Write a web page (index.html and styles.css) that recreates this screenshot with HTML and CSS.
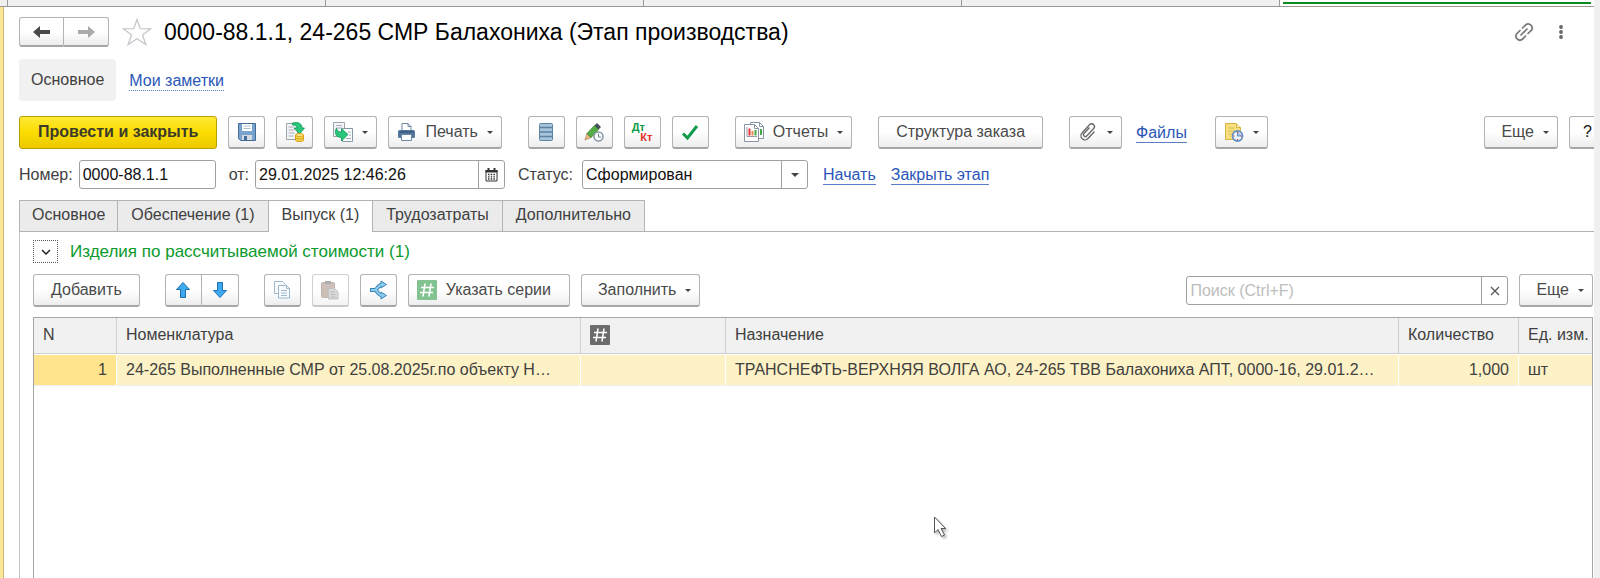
FILE: index.html
```html
<!DOCTYPE html>
<html lang="ru">
<head>
<meta charset="utf-8">
<title>0000-88.1.1, 24-265 СМР Балахониха (Этап производства)</title>
<link rel="stylesheet" href="styles.css">
</head>
<body>
<div class="app">
  <div class="window-tabs">
    <span class="window-tab-edge"></span><span class="window-tab"></span><span class="window-tab"></span><span class="window-tab"></span><span class="window-tab"></span><span class="window-tab-active"></span>
  </div>
  <main class="form">
    <header class="title-bar">
      <div class="button-pair nav-pair">
        <button class="btn" aria-label="Назад"><svg width="18" height="14" viewBox="0 0 18 14"><path d="M0 7 7 1v4h10v4H7v4z" fill="#4a4a4a"/></svg></button>
        <button class="btn" aria-label="Вперед"><svg width="18" height="14" viewBox="0 0 18 14"><path d="M18 7 11 1v4H1v4h10v4z" fill="#aaa"/></svg></button>
      </div>
      <button class="icon-btn star" aria-label="В избранное"><svg width="30" height="28" viewBox="0 0 30 28"><path d="M15 1.500 18.300 10.700 28.500 10.900 20.500 17 23.800 26.500 15 20.700 6.200 26.500 9.500 17 1.500 10.900 11.700 10.700z" fill="#fff" stroke="#c3c7cc" stroke-width="1.300"/></svg></button>
      <h1 class="title">0000-88.1.1, 24-265 СМР Балахониха (Этап производства)</h1>
      <button class="icon-btn" aria-label="Ссылка"><svg width="20" height="20" viewBox="0 0 20 20" fill="none" stroke="#777" stroke-width="1.700" stroke-linecap="round"><path d="M8.500 6 11.700 2.800a4 4 0 0 1 5.600 5.600L14 11.500M6 8.500 2.800 11.700a4 4 0 0 0 5.600 5.600L11.500 14M7 13l6-6"/></svg></button>
      <button class="icon-btn" aria-label="Меню"><svg width="4" height="14" viewBox="0 0 4 14" fill="#666"><circle cx="2" cy="2" r="1.900"/><circle cx="2" cy="7" r="1.900"/><circle cx="2" cy="12" r="1.900"/></svg></button>
    </header>

    <nav class="sections">
      <span class="section-current">Основное</span>
      <a class="link link-dotted" href="#notes">Мои заметки</a>
    </nav>

    <div class="command-bar">
      <div class="group">
        <button class="btn btn-primary">Провести и закрыть</button>
        <button class="btn btn-icon" aria-label="Записать"><svg width="20" height="20" viewBox="0 0 20 20"><path d="M1.500 1.500h17v17h-15l-2-2z" fill="#78a3cf" stroke="#426b99"/><path d="M5 2h10v7H5z" fill="#fff"/><path d="M6.500 4h7M6.500 6.500h7" stroke="#aac0d5"/><path d="M5 13h10v5H5z" fill="#d5dbe1"/><path d="M7 14h3v4H7z" fill="#426b99"/></svg></button>
        <button class="btn btn-icon" aria-label="Провести"><svg width="20" height="20" viewBox="0 0 20 20"><path d="M1.500 1.500h11v16h-11z" fill="#f4f5f6" stroke="#9aa3aa"/><path d="M3.500 5h5M3.500 8h6M3.500 11h6M3.500 14h5" stroke="#aab"/><path d="M7.500 1C13-.5 17 1.500 17 6h2.500l-5 6L9 6h3c0-2-1.500-3-4.500-3z" fill="#28c77c" stroke="#129655" stroke-width=".8"/><path d="M10.500 13v5c0 2 8 2 8 0v-5" fill="#f7d44c" stroke="#d4a017"/><ellipse cx="14.500" cy="13" rx="4" ry="1.500" fill="#ffe88a" stroke="#d4a017"/><path d="M10.500 15.500c0 2 8 2 8 0" fill="none" stroke="#d4a017"/></svg></button>
        <button class="btn btn-menu" aria-label="Создать на основании"><svg width="20" height="20" viewBox="0 0 20 20"><path d="M.5.500h11v14H.5z" fill="#f4f5f6" stroke="#9aa3aa"/><path d="M3 3.500h6M3 6h6" stroke="#aab"/><path d="M9.500 6.500h10v13h-10z" fill="#fff" stroke="#8796a8"/><path d="M15 10h3M16 13h2M13 16.500h5" stroke="#9ab"/><path d="M3.500 6c.5 3 2 4 5 4V6.500l6.500 6L8.500 19v-3.500C3 15.500 1 11 3.500 6z" fill="#28c77c" stroke="#129655" stroke-width=".8"/></svg><span class="caret"></span></button>
        <button class="btn btn-menu"><svg width="19" height="20" viewBox="0 0 19 20"><path d="M5 9V1.500h6l3 3V9" fill="#fff" stroke="#6d88a5"/><path d="M11 1.500v3h3" fill="none" stroke="#6d88a5"/><rect x="1" y="8" width="17" height="8" rx="1.500" fill="#54769c"/><path d="M2.500 10h14" stroke="#2f4f75"/><path d="M4.500 12.500h10v6h-10z" fill="#fff" stroke="#6d88a5"/></svg><span class="menu-text">Печать</span><span class="caret"></span></button>
      </div>
      <div class="group">
        <button class="btn btn-icon" aria-label="Список"><svg width="14" height="20" viewBox="0 0 14 20"><rect x=".5" y="1.500" width="13" height="17" rx="1" fill="#a9c5da" stroke="#5b83a5"/><path d="M1 5.500h12M1 10h12M1 14.500h12" stroke="#5b83a5" stroke-width="1.300"/></svg></button>
        <button class="btn btn-icon" aria-label="Отложенное изменение"><svg width="20" height="20" viewBox="0 0 20 20"><path d="M1 18 3 11.500 7 15.500z" fill="#e9bd84" stroke="#a77a45" stroke-width=".7"/><path d="M3 11.500 10.500 3.500 14.500 7.500 7 15.500z" fill="#55ad46" stroke="#377e2f" stroke-width=".8"/><path d="M10.500 3.500 13 1 17 5 14.500 7.500z" fill="#485057"/><circle cx="14.500" cy="14.500" r="4.500" fill="#fff" stroke="#8c9aaa" stroke-width="1.600"/><path d="M14.500 11.500v3.500H17" fill="none" stroke="#718091"/></svg></button>
        <button class="btn btn-icon btn-dtkt" aria-label="Проводки"><span class="debit">Дт</span><span class="credit">Кт</span></button>
        <button class="btn btn-icon" aria-label="Проверить"><svg width="18" height="18" viewBox="0 0 18 18"><path d="M2 10.500 6.500 15 16 3" fill="none" stroke="#0e9b4b" stroke-width="3"/></svg></button>
      </div>
      <div class="group">
        <button class="btn btn-menu"><svg width="20" height="20" viewBox="0 0 20 20"><path d="M6.500.5h9l4 4v12h-13z" fill="#fff" stroke="#8696a5"/><path d="M15.500.5v4h4" fill="none" stroke="#8696a5"/><path d="M17 7v6" stroke="#45a949" stroke-width="2"/><path d="M.5 2.500h10l4 4v13H.5z" fill="#fff" stroke="#8696a5"/><path d="M10.500 2.500v4h4" fill="none" stroke="#8696a5"/><path d="M3 5v9.500h10" fill="none" stroke="#99a"/><path d="M5.500 6.500v7" stroke="#e33" stroke-width="2"/><path d="M8.500 9v4.500" stroke="#e98a5b" stroke-width="2"/><path d="M11.500 8v5.500" stroke="#45a949" stroke-width="2"/></svg><span class="menu-text">Отчеты</span><span class="caret"></span></button>
      </div>
      <div class="group"><button class="btn btn-text">Структура заказа</button></div>
      <div class="group group-files">
        <button class="btn btn-menu" aria-label="Присоединенные файлы"><svg width="20" height="18" viewBox="0 0 20 18"><path d="M11.500 4.500 6 10.500a1.800 1.800 0 0 0 2.700 2.500l7-7.500a2.800 2.800 0 0 0-4.200-3.800L4 10a4 4 0 0 0 6 5.500l6.500-7" fill="none" stroke="#666" stroke-width="1.300"/></svg><span class="caret"></span></button>
        <a class="link" href="#files">Файлы</a>
      </div>
      <div class="group"><button class="btn btn-menu" aria-label="Напоминания"><svg width="20" height="20" viewBox="0 0 20 20"><path d="M1.500 1.500h11l4 4v12h-15z" fill="#f7df7e" stroke="#d5b347"/><path d="M12.500 1.500v4h4" fill="#fff0aa" stroke="#d5b347"/><path d="M4 6h6M4 9h6M4 12h4" stroke="#dcbf57"/><circle cx="13.500" cy="14" r="5" fill="#eef5fc" stroke="#6690c3" stroke-width="1.800"/><path d="M13.500 9.500V14H18" fill="#9fc0e5" stroke="#6690c3"/><path d="M13.500 10v1M13.500 17v1M9.500 14h1M16.500 14h1" stroke="#d33"/></svg><span class="caret"></span></button></div>
      <div class="group group-end">
        <button class="btn btn-more">Еще<span class="caret"></span></button>
        <button class="btn btn-icon btn-help" aria-label="Справка">?</button>
      </div>
    </div>

    <div class="fields">
      <label class="field-label" for="number">Номер:</label>
      <input class="field field-number" id="number" value="0000-88.1.1">
      <label class="field-label" for="date">от:</label>
      <div class="combo combo-date">
        <input class="combo-input" id="date" value="29.01.2025 12:46:26">
        <button class="combo-btn" aria-label="Выбрать дату"><svg width="13" height="14" viewBox="0 0 13 14"><path d="M1 2.500h11v10.500H1z" fill="#fff" stroke="#333"/><path d="M.5 2h12v2.500H.5z" fill="#333"/><path d="M3.500 0v3M9.500 0v3" stroke="#333" stroke-width="2"/><path d="M3 6.500h7.500M3 8.800h7.500M3 11h7.500" stroke="#333" stroke-width="1.300" stroke-dasharray="1.500 1.200"/></svg></button>
      </div>
      <label class="field-label" for="status">Статус:</label>
      <div class="combo combo-status">
        <select class="combo-input" id="status"><option>Сформирован</option></select>
        <span class="combo-btn"><span class="caret"></span></span>
      </div>
      <a class="link" href="#start">Начать</a>
      <a class="link" href="#close">Закрыть этап</a>
    </div>

    <div class="tabs" role="tablist">
      <button class="tab" role="tab">Основное</button>
      <button class="tab" role="tab">Обеспечение (1)</button>
      <button class="tab tab-active" role="tab" aria-selected="true">Выпуск (1)</button>
      <button class="tab" role="tab">Трудозатраты</button>
      <button class="tab" role="tab">Дополнительно</button>
    </div>

    <section class="panel">
      <div class="panel-head">
        <button class="collapse" aria-label="Свернуть"><svg width="10" height="6" viewBox="0 0 10 6"><path d="M1 1l4 4 4-4" fill="none" stroke="#222" stroke-width="1.500"/></svg></button>
        <h2 class="panel-title">Изделия по рассчитываемой стоимости (1)</h2>
      </div>
      <div class="table-bar">
        <div class="group"><button class="btn btn-text">Добавить</button></div>
        <div class="group">
          <div class="button-pair">
            <button class="btn btn-icon" aria-label="Вверх"><svg width="16" height="18" viewBox="0 0 16 18"><path d="M8 1.500 14.500 8.500H10.500V16.500H5.500V8.500H1.500z" fill="#3fa9f0" stroke="#1c6fae"/></svg></button>
            <button class="btn btn-icon" aria-label="Вниз"><svg width="16" height="18" viewBox="0 0 16 18"><path d="M8 16.500 14.500 9.500H10.500V1.500H5.500V9.500H1.500z" fill="#3fa9f0" stroke="#1c6fae"/></svg></button>
          </div>
        </div>
        <div class="group">
          <button class="btn btn-icon" aria-label="Скопировать"><svg width="18" height="18" viewBox="0 0 18 18" fill="#f8fbfd" stroke="#9db9cb"><path d="M1.500.5h8l3 3v9h-11z"/><path d="M5.500 4.500h8l3 3v9.500h-11z"/><path d="M13.500 4.500v3h3M8 9.500h6M8 12h6M8 14.500h6" fill="none"/></svg></button>
          <button class="btn btn-icon btn-disabled" disabled aria-label="Вставить"><svg width="18" height="20" viewBox="0 0 18 20"><rect x=".5" y="2.500" width="13" height="15" rx="1" fill="#a99689" stroke="#97867b"/><path d="M4 1h6v3H4z" fill="#777"/><path d="M7.500 8.500h6l3.500 3.500v7H7.500z" fill="#c2c2c2" stroke="#999"/><path d="M9.500 12h4M9.500 14.500h5M9.500 17h5" stroke="#888"/></svg></button>
          <button class="btn btn-icon" aria-label="Разбить строку"><svg width="18" height="20" viewBox="0 0 18 20"><path d="M1 10H6C8 10 9 4.500 14 4.500M6 10c2 0 3 5.500 8 5.500" fill="none" stroke="#3a86b5" stroke-width="4"/><path d="M12 1l5.500 3.500L12 8zM12 12l5.500 3.500L12 19z" fill="#8cccf0" stroke="#3a86b5"/><path d="M2 10H6C8 10 9 4.500 14 4.500M6 10c2 0 3 5.500 8 5.500" fill="none" stroke="#8cccf0" stroke-width="2"/></svg></button>
          <button class="btn btn-series"><svg width="20" height="20" viewBox="0 0 20 20"><rect width="20" height="20" rx="1" fill="#83c391"/><path d="M8 3.500 6 16.500M14 3.500 12 16.500M4 7.500h13M3 12.500h13" stroke="#fff" stroke-width="1.600"/></svg><span class="menu-text">Указать серии</span></button>
          <button class="btn btn-more">Заполнить<span class="caret"></span></button>
        </div>
        <div class="group group-end">
          <div class="combo combo-search">
            <input class="combo-input" type="text" aria-label="Поиск" placeholder="Поиск (Ctrl+F)">
            <button class="combo-btn" aria-label="Очистить"><svg width="10" height="10" viewBox="0 0 10 10"><path d="M1 1l8 8M9 1 1 9" stroke="#555" stroke-width="1.300"/></svg></button>
          </div>
          <button class="btn btn-more">Еще<span class="caret"></span></button>
        </div>
      </div>
      <div class="grid-box">
        <table class="grid">
          <colgroup><col class="col-n"><col class="col-item"><col class="col-series"><col><col class="col-qty"><col class="col-unit"></colgroup>
          <thead><tr><th>N</th><th>Номенклатура</th><th><svg width="20" height="20" viewBox="0 0 20 20" role="img" aria-label="Серия"><rect width="20" height="20" rx="1" fill="#6b6b6b"/><path d="M8 3.500 6 16.500M14 3.500 12 16.500M4 7.500h13M3 12.500h13" stroke="#fff" stroke-width="1.600"/></svg></th><th>Назначение</th><th>Количество</th><th class="cell-unit">Ед. изм.</th></tr></thead>
          <tbody><tr><td class="cell-num cell-current">1</td><td>24-265 Выполненные СМР от 25.08.2025г.по объекту Н…</td><td></td><td>ТРАНСНЕФТЬ-ВЕРХНЯЯ ВОЛГА АО, 24-265 ТВВ Балахониха АПТ, 0000-16, 29.01.2…</td><td class="cell-num">1,000</td><td class="cell-unit">шт</td></tr></tbody>
        </table>
      </div>
    </section>
  </main>
  <svg class="cursor" width="16" height="24" viewBox="0 0 16 24"><path d="M1.500 1v16l3.500-3.500 3.500 7 3-1.500-3.500-6.500h4.500z" fill="#fff" stroke="#555"/></svg>
</div>
</body>
</html>
```
FILE: styles.css
```css
* { box-sizing: border-box; }

body {
  margin: 0;
  background: #f0f0f0;
  color: #404040;
  font: 16px/20px "Liberation Sans", Arial, sans-serif;
}

button, input, select { font: inherit; color: inherit; }
button { cursor: pointer; }
svg { display: block; flex: none; }

.app {
  position: relative;
  display: flex;
  flex-direction: column;
  min-height: 100vh;
  margin-right: 6px;
  overflow: hidden;
  background: #fbe795;
}

.window-tabs {
  display: flex;
  height: 7px;
  border-bottom: 1px solid #999;
  background: #f0f0f0;
}
.window-tab-edge { flex: 0 0 8px; border-right: 1px solid #999; }
.window-tab { flex: 0 1 318px; border-right: 1px solid #999; }
.window-tab-active { flex: 1; padding: 2px 3px 0; background: #fff; }
.window-tab-active::after { content: ""; display: block; height: 2px; background: #0a8f1e; }

.form {
  flex: 1;
  display: flex;
  flex-direction: column;
  margin-left: 3px;
  padding-left: 15px;
  border-left: 1px solid #c9b875;
  background: #fff;
}

.title-bar { display: flex; align-items: center; height: 30px; margin-top: 10px; padding-right: 31px; }
.title { flex: 1; margin: 0 0 0 12px; color: #000; font-size: 23px; line-height: 28px; font-weight: 400; white-space: nowrap; }
.icon-btn { padding: 0; border: 0; background: none; }
.icon-btn + .icon-btn { margin-left: 25px; }
.star { margin-left: 13px; }

.btn {
  display: flex;
  align-items: center;
  justify-content: center;
  height: 33px;
  padding: 0;
  border: 1px solid #b3b3b3;
  border-bottom: 2px solid #a6a6a6;
  border-radius: 3px;
  background: linear-gradient(#fff 50%, #ededed);
  color: #4a4a4a;
  white-space: nowrap;
}
.btn-primary { padding: 0 18px 1px; border: 1px solid #b8a000; background: linear-gradient(#ffe935, #fbdc00 50%, #ecc900); color: #3b3b2b; font-weight: 700; }
.btn-icon { width: 37px; }
.btn-text { padding: 0 17px; }
.btn-menu { padding: 0 8px; }
.btn-more { padding: 0 8px 0 16px; }
.btn-series { padding: 0 18px 0 8px; }
.btn-help { color: #111; }
.btn-disabled { opacity: .6; }
.menu-text { margin-left: 9px; }
.caret { width: 0; margin-left: 9px; border: 3px solid transparent; border-top-color: #444; border-bottom: 0; }
.btn-dtkt { flex-direction: column; font-size: 11px; line-height: 10px; font-weight: 700; }
.debit { margin-right: 8px; color: #0b9a43; }
.credit { margin-left: 8px; color: #e2332b; }

.button-pair { display: flex; }
.button-pair .btn:first-child { border-radius: 3px 0 0 3px; }
.button-pair .btn:last-child { border-left: 0; border-radius: 0 3px 3px 0; }
.nav-pair .btn { width: 45px; height: 30px; }

.link { padding-top: 2px; color: #2b56b8; text-decoration: none; border-bottom: 1px solid #5b7cc9; line-height: 18px; white-space: nowrap; }
.link-dotted { border-bottom-style: dotted; }

.sections { display: flex; align-items: center; gap: 13px; margin-top: 12px; }
.section-current { padding: 11px 12px; border-radius: 4px; background: #f1f1f1; }

.command-bar { display: flex; gap: 26px; margin-top: 15px; }
.group { display: flex; align-items: center; gap: 11px; }
.group-end { margin-left: auto; }
.group-files { gap: 14px; padding-right: 2px; }
.command-bar .group-end { margin-right: -12px; }

.fields { display: flex; align-items: center; margin-top: 11px; }
.field-label { margin-right: 6px; }
.field, .combo { height: 29px; border: 1px solid #a0a0a0; border-radius: 3px; background: #fff; color: #111; }
.field { padding: 0 3px; }
.field-number { width: 137px; margin-right: 13px; }
.combo { display: flex; }
.combo-input { flex: 1; min-width: 0; padding: 0 3px; border: 0; background: none; appearance: none; outline: 0; }
.combo-input::placeholder { color: #bdbdbd; opacity: 1; }
.combo-btn { display: flex; align-items: center; justify-content: center; width: 26px; padding: 0; border: 0; border-left: 1px solid #a0a0a0; background: none; }
.combo-btn .caret { margin: 0; border-width: 4px 4px 0; }
.combo-date { width: 250px; margin-right: 13px; }
.combo-status { width: 226px; margin-left: 3px; }
.combo-search { width: 322px; }
.fields .link { margin-left: 15px; }

.tabs { display: flex; margin-top: 11px; border-bottom: 1px solid #b3b3b3; }
.tab { height: 31px; padding: 0 13px 2px; border: 1px solid #b3b3b3; border-bottom: 0; background: #ebebeb; }
.tab:first-child { padding: 0 12px 2px; }
.tab + .tab { border-left: 0; }
.tab-active { margin-bottom: -1px; height: 32px; padding-bottom: 3px; background: #fff; }

.panel { flex: 1; display: flex; flex-direction: column; padding: 8px 1px 0 13px; border-left: 1px solid #c4c4c4; }
.panel-head { display: flex; align-items: center; gap: 12px; }
.collapse { display: flex; align-items: center; justify-content: center; width: 25px; height: 23px; padding: 0; border: 1px dotted #555; background: #fff; }
.panel-title { margin: 0; color: #0b9a2c; font-size: 17px; line-height: 20px; font-weight: 400; }
.table-bar { display: flex; gap: 25px; margin-top: 11px; }

.grid-box { flex: 1; margin-top: 10px; border: 1px solid #a6a6a6; border-bottom: 0; }
.grid { width: 100%; border-collapse: separate; border-spacing: 0; table-layout: fixed; }
.col-n { width: 83px; }
.col-item { width: 464px; }
.col-series { width: 145px; }
.col-qty { width: 120px; }
.col-unit { width: 73px; }
.grid th, .grid td { padding: 0 9px; overflow: hidden; text-align: left; font-weight: 400; white-space: nowrap; }
.grid th { height: 36px; padding-bottom: 2px; border-right: 1px solid #d0d0d0; border-bottom: 1px solid #d0d0d0; background: #f1f1f1; }
.grid td { height: 32px; border-right: 1px solid #fff; border-top: 1px solid #fff; border-bottom: 1px solid #eee; background: #fdf1c6; }
.grid .cell-current { background: #fee48c; }
.grid .cell-num { text-align: right; }
.grid .cell-unit { padding-right: 0; border-right: 0; }

.cursor { position: absolute; left: 933px; top: 516px; filter: drop-shadow(2px 2px 1px #0004); pointer-events: none; }
```
